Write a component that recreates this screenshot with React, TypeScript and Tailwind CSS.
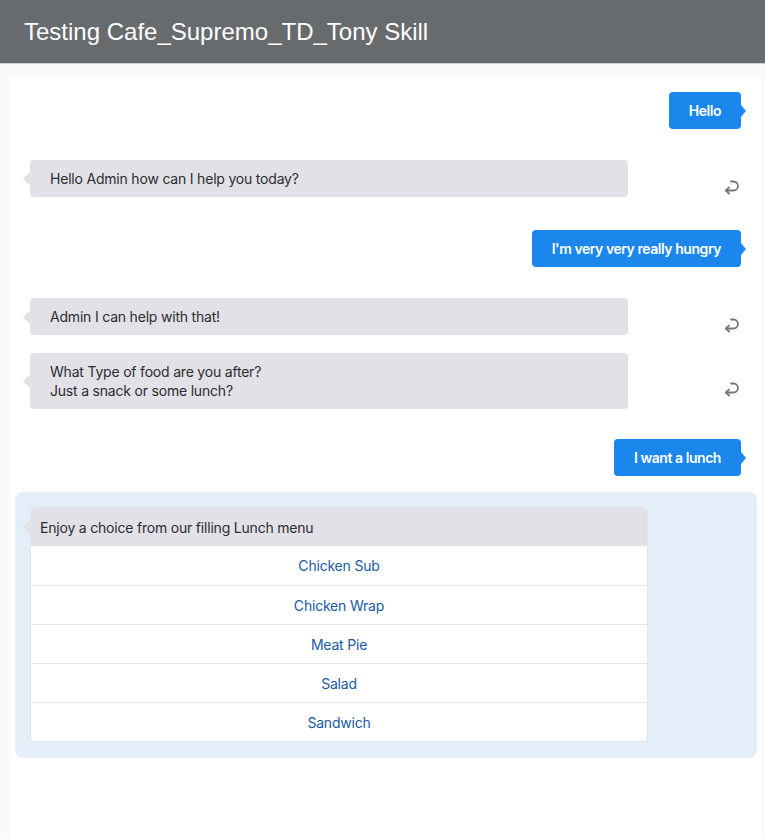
import React from 'react';

function ReplyIcon() {
    return (
        <svg width="20" height="20" viewBox="0 0 20 20" fill="none" stroke="#73777b" strokeWidth="1.8" strokeLinecap="round" strokeLinejoin="round">
            <path d="M10 4.5h2.5a4.5 4.5 0 0 1 0 9H5" />
            <path d="M8 10.5l-3 3 3 3" />
        </svg>
    );
}

function UserBubble({ text, className = '' }: { text: string; className?: string }) {
    return (
        <div className={`flex justify-end pr-[20px] ${className}`}>
            <div className="relative rounded bg-[#1b87ec] px-5 h-[37px] flex items-center text-[14px] font-semibold tracking-[-0.45px] text-white">
                {text}
                <span className="absolute right-[-5px] top-1/2 -translate-y-1/2 border-y-[6px] border-l-[5px] border-y-transparent border-l-[#1b87ec]" />
            </div>
        </div>
    );
}

function BotBubble({ lines, className = '' }: { lines: string[]; className?: string }) {
    return (
        <div className={`flex items-center justify-between pl-[19px] pr-[20px] ${className}`}>
            <div className="relative w-[598px] rounded bg-[#e1e1e7] px-5 py-[9px] text-[14px] leading-[19px] tracking-[-0.2px] text-[#2d2d30]">
                {lines.map((l) => (
                    <div key={l}>{l}</div>
                ))}
                <span className="absolute left-[-7px] top-1/2 -translate-y-1/2 border-y-[7px] border-r-[7px] border-y-transparent border-r-[#e1e1e7]" />
            </div>
            <div className="pt-[16px]">
                <ReplyIcon />
            </div>
        </div>
    );
}

export default function App() {
    const menu = ['Chicken Sub', 'Chicken Wrap', 'Meat Pie', 'Salad', 'Sandwich'];

    return (
        <div className="min-h-[839px] bg-[#f9fafc] font-['Inter','Noto_Sans',sans-serif]">
            {/* Header */}
            <header className="h-[64px] bg-[#676b6e] border-b border-[#c9d0d8] flex items-center px-6">
                <h1 className="font-['Liberation_Sans',Arial,sans-serif] text-[24px] text-white">
                    Testing Cafe_Supremo_TD_Tony Skill
                </h1>
            </header>

            <div className="pl-[11px] pr-[4px] pt-[13px]">
                <div className="bg-white min-h-[762px] pt-[15px]">
                    <UserBubble text="Hello" />
                    <BotBubble className="mt-[31px]" lines={['Hello Admin how can I help you today?']} />
                    <UserBubble className="mt-[33px]" text="I'm very very really hungry" />
                    <BotBubble className="mt-[31px]" lines={['Admin I can help with that!']} />
                    <BotBubble className="mt-[18px]" lines={['What Type of food are you after?', 'Just a snack or some lunch?']} />
                    <UserBubble className="mt-[30px]" text="I want a lunch" />

                    {/* Lunch menu card */}
                    <div className="mt-[16px] mx-[4px] rounded-lg bg-[#e4eef8] pt-[15px] pb-[16px] pl-[15px]">
                        <div className="relative w-[618px] rounded border border-[#e3e3e8] bg-white">
                            <div className="relative rounded-t bg-[#e1e1e7] h-[38px] flex items-center px-[9px] text-[14px] tracking-[-0.2px] text-[#2d2d30]">
                                Enjoy a choice from our filling Lunch menu
                                <span className="absolute left-[-8px] top-1/2 -translate-y-1/2 border-y-[7px] border-r-[7px] border-y-transparent border-r-[#e1e1e7]" />
                            </div>
                            {menu.map((m, i) => (
                                <div
                                    key={m}
                                    className={`h-[39px] flex items-center justify-center text-[14px] tracking-[-0.2px] text-[#1a5aa3] ${i > 0 ? 'border-t border-[#e6e6ea]' : ''}`}
                                >
                                    {m}
                                </div>
                            ))}
                        </div>
                    </div>
                </div>
            </div>
        </div>
    );
}
